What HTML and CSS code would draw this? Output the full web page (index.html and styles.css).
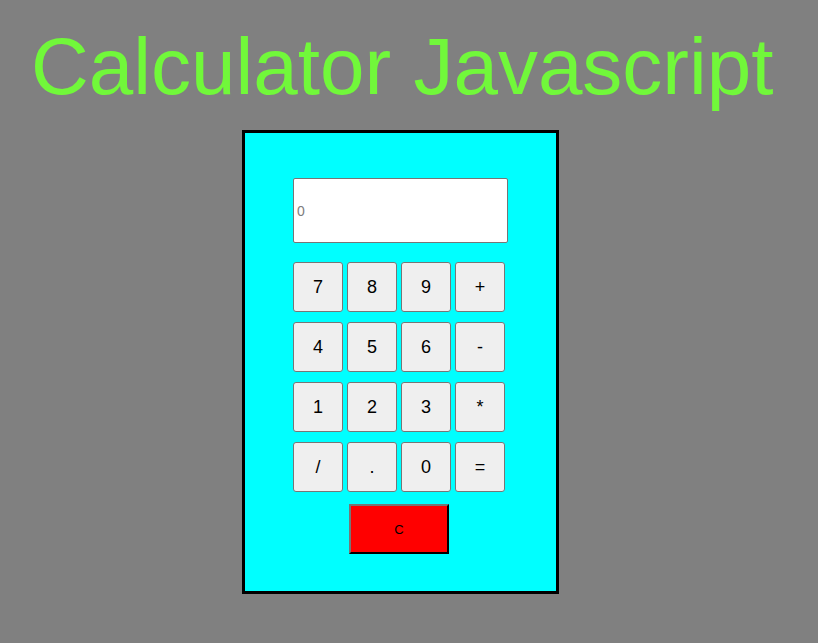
FILE: index.html
```html
<!DOCTYPE html>
<html>
<head>
<meta charset="utf-8">
<link rel="stylesheet" href="styles.css">
</head>
<body>
<h1 class="title">Calculator Javascript</h1>
<div class="wrap">
  <div class="calc">
    <input class="display" type="text" placeholder="0">
    <div class="keys">
      <button class="key">7</button>
      <button class="key">8</button>
      <button class="key">9</button>
      <button class="key">+</button>
      <button class="key">4</button>
      <button class="key">5</button>
      <button class="key">6</button>
      <button class="key">-</button>
      <button class="key">1</button>
      <button class="key">2</button>
      <button class="key">3</button>
      <button class="key">*</button>
      <button class="key">/</button>
      <button class="key">.</button>
      <button class="key">0</button>
      <button class="key">=</button>
    </div>
    <button class="clear">C</button>
  </div>
</div>
</body>
</html>
```
FILE: styles.css
```css
html, body {
  margin: 0;
  padding: 0;
}
body {
  background: #808080;
  font-family: "Liberation Sans", Arial, sans-serif;
  padding: 8px;
  height: 643px;
  box-sizing: border-box;
}
.title {
  margin: 13px 0 0 23px;
  font-weight: normal;
  font-size: 80px;
  line-height: 92px;
  color: #71f83a;
}
.wrap {
  display: flex;
  padding-left: 234px;
  margin-top: 17px;
}
.calc {
  width: 317px;
  height: 464px;
  border: 3px solid #000;
  background: #00ffff;
  display: flex;
  flex-direction: column;
  align-items: flex-start;
  padding: 45px 0 0 48px;
  box-sizing: border-box;
}
.display {
  width: 215px;
  height: 65px;
  box-sizing: border-box;
  border: 1px solid #767676;
  border-radius: 2px;
  padding: 0 3px;
  margin: 0;
  font-family: "Liberation Sans", Arial, sans-serif;
  font-size: 14px;
  background: #fff;
}
.display::placeholder {
  color: #7d7d7d;
}
.keys {
  margin-top: 19px;
  display: grid;
  grid-template-columns: repeat(4, 50px);
  grid-auto-rows: 50px;
  column-gap: 4px;
  row-gap: 10px;
}
.key {
  box-sizing: border-box;
  border: 1px solid #767676;
  border-radius: 3px;
  background: #efefef;
  font-family: "Liberation Sans", Arial, sans-serif;
  font-size: 18px;
  color: #000;
  padding: 0;
}
.clear {
  margin: 12px 0 0 56px;
  width: 100px;
  height: 50px;
  box-sizing: border-box;
  background: #ff0000;
  border: 2px outset #767676;
  border-color: #767676 #222 #222 #767676;
  font-family: "Liberation Sans", Arial, sans-serif;
  font-size: 13px;
  color: #000;
  padding: 0;
}
```
